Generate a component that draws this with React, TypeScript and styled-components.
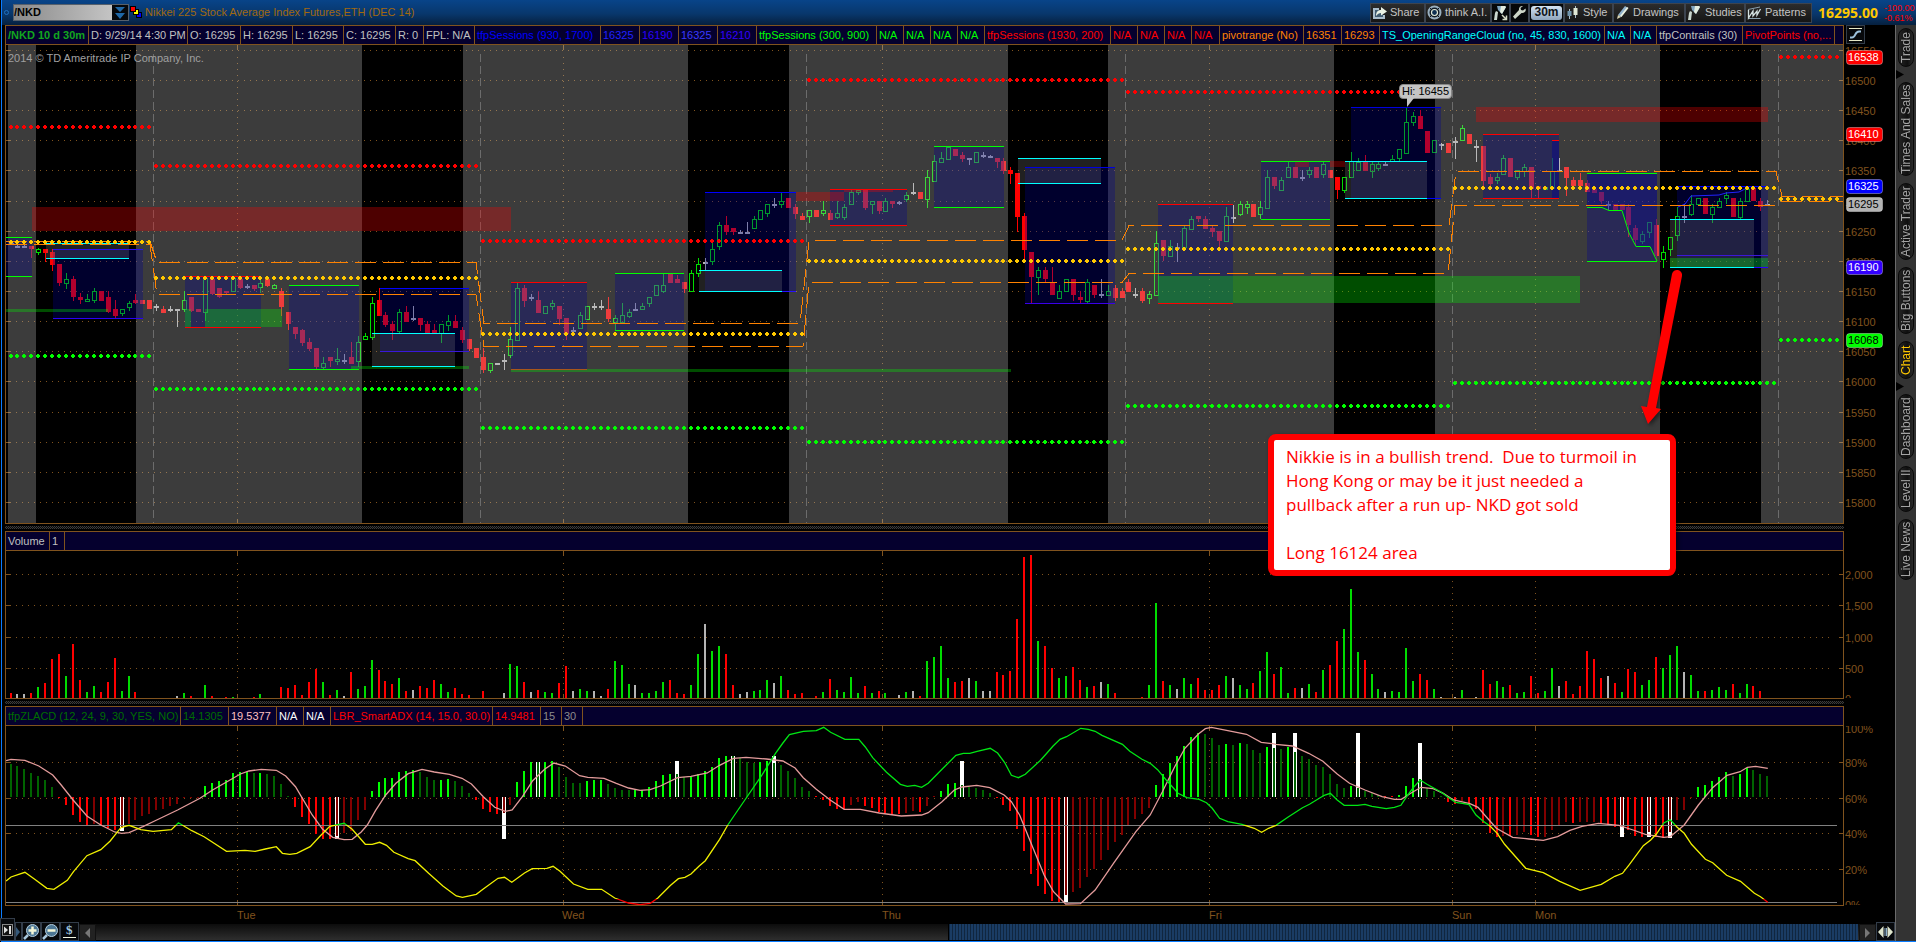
import React from 'react';
import styled, { createGlobalStyle } from 'styled-components';

const BROWN = '#80531e';
const NAVY = '#05002e';

const GlobalStyle = createGlobalStyle`
  html, body, #root { height: 100%; margin: 0; }
  body {
    background: #000;
    font-family: "Liberation Sans", Arial, sans-serif;
    font-size: 11px;
    line-height: 13px;
    overflow: hidden;
  }
  *, *::before, *::after { box-sizing: border-box; }
  button, input { font: inherit; margin: 0; }
`;

/* ---------- layout ---------- */

const Page = styled.div`
  min-height: 100vh;
  display: flex;
  flex-direction: column;
  margin-left: 1px;
  border-left: 1px solid #0a7cff;
  border-bottom: 1px solid #0a7cff;
  background: #000;
`;

const TopBar = styled.header`
  height: 25px;
  flex: none;
  display: flex;
  align-items: center;
  background: linear-gradient(#084489, #08376c 55%, #06203f);
`;

const Body = styled.div`
  flex: 1;
  display: flex;
  min-height: 0;
`;

const Workspace = styled.main`
  position: relative;
  flex: 1;
  min-width: 0;
  display: flex;
  flex-direction: column;
`;

const PanelRow = styled.section`
  display: flex;
  padding-left: 3px;
`;

const Panel = styled.div`
  flex: 1;
  min-width: 0;
  border: 1px solid ${BROWN};
`;

const Axis = styled.aside`
  width: 51px;
  flex: none;
  display: flex;
  flex-direction: column;
  align-items: flex-start;
`;

const AxisHead = styled.div`
  height: 20px;
  padding-left: 2px;
`;

const Plot = styled.svg<{ $h: number }>`
  display: block;
  width: 100%;
  height: ${(p) => p.$h}px;
`;

const Scale = styled.svg<{ $h: number }>`
  display: block;
  width: 51px;
  height: ${(p) => p.$h}px;
  font-family: "Liberation Sans", Arial, sans-serif;
  font-size: 11px;
`;

const Splitter = styled.div`
  height: 7px;
  margin: 0 51px 0 3px;
  padding: 2px 0;
  background: repeating-conic-gradient(#3c3c3c 0 25%, #0a0a0a 0 50%) 0 0 / 2px 2px content-box;
`;

/* ---------- top bar ---------- */

const Pin = styled.span`
  width: 5px;
  height: 5px;
  margin: 0 4px 0 2px;
  border: 1px solid #1f6fc0;
  border-radius: 50%;
`;

const SymbolBox = styled.div`
  display: flex;
  width: 116px;
  height: 17px;
  border: 1px solid #56606c;
`;

const SymbolInput = styled.input`
  flex: 1;
  min-width: 0;
  border: 0;
  padding: 0;
  background: linear-gradient(90deg, #8a8a8a, #c4c4c4);
  color: #000;
  font-weight: bold;
  outline: none;
`;

const DropButton = styled.button`
  width: 16px;
  border: 0;
  padding: 0;
  background: #05080c;
  line-height: 0;
`;

const LinkButton = styled.button`
  width: 13px;
  height: 15px;
  margin: 0 2px 0 1px;
  padding: 0;
  border: 0;
  background: none;
`;

const Title = styled.h1`
  flex: 1;
  margin: 0;
  font-size: 11px;
  font-weight: normal;
  color: #a2690f;
  white-space: nowrap;
`;

const Tools = styled.div`
  display: flex;
  height: 20px;
`;

const ToolButton = styled.button<{ $w: number; $dark?: boolean }>`
  width: ${(p) => p.$w}px;
  height: 20px;
  display: flex;
  align-items: center;
  gap: 3px;
  padding: 0 0 0 1px;
  border: 1px solid #3c4450;
  background: ${(p) => (p.$dark ? '#050709' : 'linear-gradient(#2c2c2c, #151515)')};
  color: #c4c4c4;
  white-space: nowrap;

  svg { flex: none; }
`;

const Timeframe = styled.span`
  width: 31px;
  height: 14px;
  border-radius: 3px;
  background: linear-gradient(#d3e3f2, #8fa5bd);
  color: #10151b;
  font-size: 12px;
  font-weight: bold;
  text-align: center;
`;

const Last = styled.strong`
  width: 72px;
  padding-left: 6px;
  color: #ffc800;
  font: bold 14px "Open Sans", sans-serif;
`;

const Change = styled.div`
  width: 32px;
  color: #ff0000;
  font-size: 9px;
  line-height: 10px;
`;

/* ---------- study strips ---------- */

const Strip = styled.div`
  display: flex;
  height: 19px;
  background: ${NAVY};
  border-bottom: 1px solid ${BROWN};
`;

const StripCell = styled.span<{ $w: number; $color?: string; $bold?: boolean }>`
  flex: 0 1 ${(p) => p.$w}px;
  min-width: 0;
  padding: 3px 0 0 2px;
  overflow: hidden;
  white-space: nowrap;
  border-right: 1px solid ${BROWN};
  color: ${(p) => p.$color ?? '#c0c0c0'};
  font-weight: ${(p) => (p.$bold ? 'bold' : 'normal')};
`;

/* ---------- side tabs ---------- */

const Sidebar = styled.nav`
  width: 21px;
  flex: none;
  display: flex;
  flex-direction: column;
  align-items: center;
  gap: 7px;
  padding-top: 3px;
  background: #333;
  border-left: 1px solid #6a6a6a;
`;

const SideTab = styled.button<{ $h: number; $active?: boolean }>`
  width: 16px;
  height: ${(p) => p.$h}px;
  padding: 0;
  border: 1px solid #090909;
  border-radius: 8px;
  background: linear-gradient(90deg, #2a2a2a, #101010 40%, #242424);
  color: ${(p) => (p.$active ? '#ffc800' : '#a4a4a4')};
  font-size: 12px;
  line-height: 14px;
  white-space: nowrap;
  writing-mode: vertical-rl;
  transform: rotate(180deg);
`;

const Notch = styled.svg`
  width: 8px;
  height: 9px;
  margin: -4px 0;
  align-self: flex-start;
`;

/* ---------- bottom ---------- */

const TimeAxis = styled.svg`
  display: block;
  width: calc(100% - 54px);
  height: 16px;
  margin-left: 3px;
  font-family: "Liberation Sans", Arial, sans-serif;
  font-size: 11px;
`;

const BottomBar = styled.footer`
  display: flex;
  flex: none;
  height: 19px;
  margin-left: -2px;
`;

const IconButton = styled.button<{ $w: number; $tall?: boolean }>`
  width: ${(p) => p.$w}px;
  height: ${(p) => (p.$tall ? 23 : 19)}px;
  margin-top: ${(p) => (p.$tall ? -4 : 0)}px;
  padding: 0;
  flex: none;
  display: flex;
  align-items: center;
  justify-content: center;
  border: 1px solid #333d4a;
  background: #07090c;
`;

const ScrollStep = styled(IconButton)`
  border-color: #111;
  background: #222;
  height: 17px;
  margin-top: 2px;
`;

const Track = styled.div`
  flex: 1;
  height: 16px;
  margin-top: 2px;
  display: flex;
  justify-content: flex-end;
  background: linear-gradient(#0c0c0c, #2e2e2e);
`;

const Thumb = styled.div`
  width: 51.6%;
  height: 16px;
  margin-right: 1px;
  border-left: 1px solid #000;
  background: repeating-linear-gradient(90deg, #10263f 0 1px, #1a3c64 1px 3px);
`;

/* ---------- annotations ---------- */

const Callout = styled.div`
  position: absolute;
  top: 409px;
  right: 219px;
  width: 408px;
  height: 142px;
  padding: 5px 0 0 12px;
  border: 6px solid #ff0000;
  border-radius: 8px;
  background: #fff;
  box-shadow: 2px 2px 4px rgba(0, 0, 0, 0.6);
  color: #ff0000;
  font: 17px/24px "Open Sans", "Noto Sans", sans-serif;
  white-space: pre;
`;

const Arrow = styled.svg`
  position: absolute;
  top: 241px;
  right: 206px;
  width: 56px;
  height: 166px;
  filter: drop-shadow(2px 2px 2px rgba(0, 0, 0, 0.5));
`;

const HighFlag = styled.div`
  position: absolute;
  top: 59px;
  right: 443px;
  width: 53px;
  height: 15px;
  border: 1px solid #888;
  border-radius: 4px;
  background: #c4c4c4;
  color: #000;
  text-align: center;
`;

const HighTail = styled.svg`
  position: absolute;
  top: 73px;
  right: 480px;
  width: 9px;
  height: 10px;
`;

/* ---------- chart data ---------- */

const barX = (i: number) => Math.floor(11 + i * 6.944);

// kind high top bottom low, one entry for each half hour
const candles = `
w 240 243 243 243,w 245 246 247 247,w 245 246 247 247,r 246 246 249 258,g 248 249 252 255,r 249 249 253 262,r 249 252 265 271,r 264 264 283 286,g 273 279 283 289,r 276 279 297 301,
r 293 297 300 304,g 294 299 301 301,g 288 291 300 303,r 291 291 301 301,r 291 297 312 313,r 300 309 316 318,g 309 309 313 316,g 301 303 307 311,r 294 300 303 304,r 300 300 304 304,
r 300 300 309 309,w 304 306 308 311,r 306 309 313 313,w 306 309 310 312,w 309 309 310 327,g 291 300 309 312,r 297 297 311 312,r 309 309 312 312,g 278 278 312 321,r 279 279 294 295,
r 288 288 297 298,r 291 291 293 294,g 278 278 291 292,r 278 279 288 289,w 284 286 287 289,r 285 285 289 291,g 280 283 287 293,r 279 279 286 287,g 284 285 288 288,r 288 291 307 316,
r 312 312 324 330,r 327 327 334 339,r 329 330 343 346,r 338 342 349 351,r 348 348 367 369,g 357 363 367 369,r 357 357 361 367,g 348 359 361 365,w 354 360 362 364,r 342 357 364 364,
g 336 342 361 367,g 333 336 339 339,g 297 303 337 340,r 288 300 316 316,r 312 315 325 327,r 321 324 331 340,g 309 312 331 333,r 306 312 322 322,w 306 318 320 321,r 318 318 325 331,
r 321 324 333 333,r 324 330 333 333,g 324 324 333 343,g 315 321 325 331,r 315 321 328 328,r 327 330 340 343,r 339 339 349 351,r 348 348 358 358,r 348 357 370 373,g 363 363 370 373,
w 363 363 364 364,w 354 360 362 370,g 327 339 355 358,g 283 288 340 340,r 285 288 301 307,w 294 297 299 301,r 291 300 313 313,g 306 306 313 313,g 300 303 306 310,r 306 306 319 325,
r 318 318 334 340,w 327 330 331 333,g 312 315 328 328,g 306 306 319 319,w 303 306 308 310,w 300 306 307 310,r 297 309 319 322,g 315 318 322 330,g 303 315 322 322,g 309 312 316 318,
w 303 309 311 311,g 303 306 309 309,g 297 297 303 307,g 285 285 295 295,g 274 285 291 293,r 274 274 283 283,r 275 279 283 283,r 282 282 289 293,g 270 273 291 291,g 258 264 273 277,
w 258 262 263 270,g 243 249 261 265,g 222 225 246 250,r 216 225 232 235,r 228 228 232 235,w 230 232 233 234,w 222 232 233 233,g 216 219 228 228,g 210 210 219 219,g 204 204 213 217,
w 198 204 206 208,g 193 201 204 208,r 198 198 208 208,r 204 207 214 219,r 213 216 220 220,g 210 210 216 223,r 210 210 217 217,g 201 210 213 216,r 210 213 220 220,g 201 213 217 219,
g 204 207 217 220,g 190 192 204 204,g 190 190 192 195,r 190 190 208 210,g 201 201 204 214,r 201 201 211 214,g 198 201 211 211,r 201 201 204 208,w 201 202 203 205,g 192 195 199 202,
w 183 192 193 195,r 192 192 199 199,g 170 177 199 208,g 155 161 181 181,g 152 158 162 162,g 147 147 159 159,r 149 149 156 156,r 152 155 159 162,w 158 158 159 165,g 152 152 162 162,
w 152 155 156 158,w 155 156 157 158,r 158 158 162 168,r 158 161 171 174,r 167 170 174 184,r 173 173 217 232,r 213 216 250 260,r 252 252 277 303,g 267 270 277 295,r 267 270 279 283,
r 267 282 295 295,g 285 291 298 298,g 279 279 291 291,r 279 279 295 301,r 291 297 300 303,g 279 282 301 303,r 285 285 295 298,w 279 294 295 298,g 285 291 295 295,r 285 288 298 301,
r 288 291 298 298,r 279 282 292 292,w 288 294 295 298,r 288 291 301 303,g 291 294 298 304,g 231 243 295 295,r 240 240 256 261,g 240 246 256 256,w 243 247 248 262,g 225 228 247 247,
g 216 219 229 229,r 216 216 219 222,r 216 219 229 229,r 225 228 232 237,r 231 231 241 247,g 207 216 241 241,w 205 217 218 223,g 201 204 214 216,g 201 204 207 214,r 204 204 217 217,
g 201 207 214 219,g 170 177 208 208,r 177 177 186 189,g 177 180 190 190,g 162 167 177 177,r 167 167 178 178,w 170 177 178 181,g 167 170 174 178,r 167 167 178 178,g 162 164 174 178,
r 170 170 178 178,r 177 177 190 199,g 177 177 190 193,g 152 161 177 177,g 158 162 170 170,r 155 162 171 171,g 161 164 171 178,g 162 164 168 171,w 162 164 165 165,g 155 159 161 161,
g 149 149 158 161,g 108 122 153 153,g 112 116 122 126,r 110 116 129 129,r 131 131 153 153,g 140 140 152 152,w 143 144 145 150,r 143 143 153 153,w 137 141 142 159,g 125 128 140 140,
r 134 134 144 144,w 140 146 147 162,r 146 146 181 189,r 174 177 184 189,g 173 177 180 184,g 155 158 174 174,r 158 158 177 177,g 170 170 177 180,g 164 167 171 177,r 167 167 189 199,
r 186 186 189 199,g 186 187 189 189,g 158 171 188 188,w 158 170 171 171,r 167 167 178 196,r 177 180 186 186,r 173 180 186 186,r 180 183 192 192,r 189 189 193 193,r 192 192 201 204,
w 201 204 205 210,r 204 204 210 210,r 204 204 210 210,r 204 207 225 237,r 225 228 240 246,g 231 234 241 244,g 222 222 232 238,r 219 225 256 260,g 246 252 259 268,g 237 237 249 256,
g 207 216 235 241,w 204 216 217 223,g 195 204 214 216,g 198 198 204 204,r 198 198 214 214,g 204 207 214 223,g 198 201 207 207,g 192 195 198 204,r 198 198 217 217,g 198 201 217 219,
g 186 189 201 201,r 188 188 201 201,r 198 201 207 211,w 200 204 205 205`
  .trim()
  .split(/,\s*/)
  .map((s) => {
    const [kind, ...v] = s.split(' ');
    const [high, top, bottom, low] = v.map(Number);
    return { kind, high, top, bottom, low };
  });

const volume = `
r5 w4 w4 r5 g11 r15 r39 r44 g22 r54 r18 g6 g12 r6 r16 r40 g7 g22 r6 w0 w0 w0 w0 w0 w2 g5 r2 w0 g13 r2
w0 r1 g1 w0 w0 r1 g4 w0 w0 r11 r10 r13 r3 r16 r29 g16 r3 g8 w2 r26 g9 g12 g38 r28 r17 r14 g20 r7 w8 r12
r10 r18 g14 g6 r10 r4 r3 w0 r7 w0 w0 w5 g34 g32 r16 w6 r8 g6 g5 r15 r32 w7 g9 g7 w7 w2 r9 g37 g33 g14
w13 g5 g5 g7 g16 r18 r5 r4 g13 g44 w74 g47 g52 r44 r13 w4 w6 g7 g8 g18 w15 g22 r8 r4 r5 w0 r2 g6 r19 g8
g6 g21 g5 r12 g5 r7 g5 w0 w3 g6 w7 r2 g37 g41 g52 g20 r16 r17 w20 g17 w7 w7 r26 r23 r27 r79 r141 r143 g57 r52
r30 g20 g22 r31 r18 g11 r12 w16 g14 r5 w0 w0 w0 r1 g13 g95 r17 g13 w9 g20 g14 r20 r8 r8 r13 g22 w20 g13 g9 r15
g27 g46 r24 g31 g5 r10 w10 g14 r6 g28 r33 r57 g69 g109 g46 r38 g24 g9 w6 g7 g6 g50 g17 r24 r18 g9 w1 w0 w1 g8
w0 w1 r28 r14 g17 g11 r13 g5 g6 r22 r5 g7 g30 w12 r17 r4 r12 r47 r39 r20 w22 r15 g6 r29 r26 g13 g18 r41 g30 g43
g52 w26 g23 g7 r7 g8 g11 g8 r14 g5 g14 r12 r7`
  .trim()
  .split(/\s+/)
  .map((s) => ({ kind: s[0], size: Number(s.slice(1)) }));

// G/R: momentum growing, g/r: fading; a number after "/" is a white signal bar
const momentum = `
g33 g31 g28 g24 g21 g17 g10 R-1 R-8 R-18 R-25 R-28 r-27 R-28 R-31 R-33 r-31/-34 r-27 r-23 r-19 r-17 r-13 r-12 r-9 r-7 r-1 r-1 r-1 G11 G14
G16 G17 G24 G25 G25 g24 G24 g23 g21 g13 g1 R-10 R-20 R-27 R-37 R-42 R-42 r-39/-42 r-36 r-34 r-23 r-13 G6 G15 G19 G19 G25 G26 G27 g25
g20 g17 G17 G18 g16 g11 g4 R-3 R-12 R-15 R-17 r-16/-42 r-8 G15 G26 G35 g35/35 G35 G36 g30 g20 g14 g14 G16 G17 G17 g13 g9 g7 g7
G7 G7 G10 G16 G22 G23 g23/36 g20 G20 G23 G26 G30 G39 G41 g41/41 g39 g35 g34 G35 G36 g34/41 g32 g26 g19 g10 g6 R1 R-3 R-9 R-12
R-12 r-8 r-5 R-9 R-11 R-15 R-16 R-17 R-17 r-16 r-14 R-15 r-9 r1 G6 G13 G14 g12/36 g10 g9 g7 g4 R-1 R-8 R-14 R-32 R-54 R-77 R-89 R-97
R-104 R-105 r-98/-105 r-95 r-91 r-80 r-72 r-63 r-53 r-45 r-38 r-28 r-22 r-17 r-11 G12 G23 G34 G41 G51 G60 G64 g63 g59 g52 G53 g52 G54 g53 g47
g44 G50 g49/64 g48 G50 g45/64 g41 g38 g32 g30 g23 g13 g9 G11 g9/64 g6 g4 g2 R1 R1 G2 G11 G19 g18/54 g9 g6 g1 R-5 R-7 r-4
R-8 R-12 R-26 R-36 R-40 r-39 R-39 r-38 r-35 R-38 R-40 r-40 r-33 r-28 r-25 R-26 r-25 r-25 r-25 R-27 R-28 R-30 r-30/-40 R-33 R-39 R-40 r-35/-40 R-40 R-41 r-35/-41
r-23 r-13 r-1 G10 G12 G16 G20 G25 g21 G23 G29 g27 g23 g21`
  .trim()
  .split(/\s+/)
  .map((s) => {
    const [v, w] = s.slice(1).split('/');
    return { kind: s[0], size: Number(v), signal: w === undefined ? null : Number(w) };
  });

// Curve points are kept on a finer integer grid: 2.45 steps to a unit across, 3 down.
const trace = (ox: number, oy: number, pts: string) =>
  pts
    .trim()
    .split(/\s+/)
    .map((p) => {
      const [x, y] = p.split(',').map(Number);
      return `${(ox + x / 2.45).toFixed(1)},${(oy + y / 3).toFixed(1)}`;
    })
    .join(' ');

const signalLine = [
  trace(0, 530, `15,692 27,688 61,691 95,708 129,735 150,765 179,810 213,858 247,885 281,906 298,910 316,908 350,890 384,870 435,840 490,805 520,781 589,732 610,723 640,718 677,721 700,738 724,770 741,805 765,855 790,897 815,922 843,929 863,928 885,906 900,885 920,842 945,795 970,760 1000,731 1034,718 1064,726 1101,733 1132,745 1155,762 1184,800 1212,832 1238,844 1255,840 1280,800 1305,752 1335,717 1357,699 1385,708 1420,737 1440,742 1480,745 1510,760 1540,774`),
  trace(640, 530, `0,781 25,779 50,768 92,743 125,739 165,729 195,706 229,685 260,682 310,687 350,693 380,714 400,743 432,778 466,810 500,838 540,838 586,849 640,858 690,855 706,848 740,815 770,780 789,771 825,766 857,773 892,795 910,815 930,855 960,945 990,1035 1013,1085 1043,1122 1079,1121 1115,1080 1160,1000 1215,905 1250,855 1280,785 1310,710 1335,655 1368,612 1385,596 1400,592 1440,602 1486,613 1522,637 1550,641`),
  trace(1276, 600, `0,433 40,438 80,460 115,484 150,522 180,550 218,570 260,590 290,598 307,598 330,580 355,562 385,566 410,580 435,600 475,611 495,622 515,650 540,685 580,712 620,717 655,721 690,710 720,691 750,679 790,670 840,676 875,690 905,703 950,712 966,710 1000,675 1035,615 1070,563 1105,526 1137,515 1155,502 1175,499 1205,505`),
].join(' ');

const adxLine = [
  trace(0, 530, `15,1053 27,1041 61,1027 85,1048 115,1075 132,1078 165,1051 180,1025 213,977 247,959 270,933 296,893 316,886 345,899 375,904 420,899 437,878 470,902 500,920 555,964 600,961 625,964 650,957 677,950 692,970 710,973 727,970 760,950 785,917 808,889 843,880 863,898 895,943 912,943 930,937 947,946 965,967 1000,986 1017,992 1050,1030 1085,1068 1118,1098 1133,1102 1167,1093 1184,1077 1220,1045 1236,1042 1254,1057 1285,1029 1304,1016 1340,1015 1355,1009 1372,1024 1405,1062 1440,1078 1474,1078 1506,1104 1540,1119 1568,1124`),
  trace(640, 530, `25,1120 43,1105 75,1066 94,1046 110,1042 125,1032 145,1008 160,992 195,928 215,885 240,840 262,801 300,733 332,670 350,639 366,614 400,604 432,602 450,592 467,607 502,628 536,628 552,651 570,683 604,727 638,763 655,769 673,766 690,772 706,760 740,718 774,676 792,670 808,670 826,664 858,655 876,669 893,697 910,736 927,743 944,733 980,692 995,672 1012,648 1029,628 1045,620 1080,595 1098,598 1115,604 1132,616 1182,643 1200,664 1230,688 1250,700 1268,719 1290,751 1318,790 1340,803 1370,808 1388,818 1402,835 1420,865 1440,875 1475,883 1505,895 1523,907 1540,895`),
  trace(1276, 600, `0,676 30,651 65,623 82,613 118,586 133,580 150,600 167,616 200,616 218,613 235,619 270,626 290,622 306,616 320,590 335,565 353,540 370,553 405,577 420,590 440,607 457,610 473,614 490,645 508,664 525,679 542,700 560,733 612,805 655,818 695,844 745,871 797,853 830,829 849,820 866,793 900,737 918,720 932,702 950,669 966,659 983,682 1000,700 1018,733 1052,778 1070,788 1104,826 1138,844 1172,880 1187,890 1205,907`),
].join(' ');

const priceGrid = [
  [50, '16550'], [80, '16500'], [110, '16450'], [140, '16400'], [170, '16350'], [201, '16300'],
  [231, '16250'], [261, '16200'], [291, '16150'], [321, '16100'], [351, '16050'], [381, '16000'],
  [412, '15950'], [442, '15900'], [472, '15850'], [502, '15800'],
] as [number, string][];

const volumeGrid = [[574, '2,000'], [605, '1,500'], [637, '1,000'], [668, '500'], [698, '0']] as [number, string][];
const percentGrid = [[728, '100%'], [762, '80%'], [798, '60%'], [833, '40%'], [869, '20%'], [904, '0%']] as [number, string][];

const badges = [
  [57, '16538', '#ff0000', '#fff'],
  [134, '16410', '#ff0000', '#fff'],
  [186, '16325', '#0000ff', '#fff'],
  [204, '16295', '#b4b4b4', '#000'],
  [267, '16190', '#3300ff', '#fff'],
  [340, '16068', '#00ff00', '#000'],
] as [number, string, string, string][];

const dayNames = [[237, 'Tue'], [562, 'Wed'], [882, 'Thu'], [1209, 'Fri'], [1452, 'Sun'], [1535, 'Mon']] as [number, string][];
const dateLines = [237, 563, 882, 1209, 1535];
const sessionBreaks = [153, 480, 806, 1125, 1452, 1778];
const dayBands = [[8, 36], [136, 362], [463, 688], [789, 1008], [1108, 1334], [1435, 1660], [1761, 1843]];

// from bar, to bar, resistance, pivot, support
const pivots = [
  [0, 20, 127, 242, 356], [21, 67, 166, 278, 389], [68, 114, 241, 334, 428], [115, 160, 80, 261, 442],
  [161, 207, 92, 249, 406], [208, 254, 0, 188, 383], [255, 263, 57, 199, 340],
];

// x1, x2, y1, y2, line above, line below
const sessions = [
  [6, 32, 237, 276, '#0f0', '#0f0'],
  [53, 143, 249, 318, '#2a10ee', '#2a00f5'],
  [185, 261, 276, 327, '#f00', '#f00'],
  [289, 359, 285, 369, '#0f0', '#0f0'],
  [380, 469, 288, 351, '#00f', '#3a18d8'],
  [511, 587, 282, 369, '#f00', '#a8561c'],
  [615, 684, 273, 330, '#0f0', '#0f0'],
  [705, 796, 192, 291, '#00f', '#2a10ff'],
  [830, 907, 189, 225, '#f00', '#f00'],
  [934, 1004, 146, 207, '#0f0', '#0f0'],
  [1025, 1115, 167, 303, '#00d', '#3a00e8'],
  [1158, 1233, 204, 303, '#f00', '#f00'],
  [1261, 1330, 161, 219, '#0f0', '#0f0'],
  [1351, 1441, 107, 198, '#00d', '#00f'],
  [1483, 1559, 134, 198, '#f00', '#f00'],
  [1587, 1657, 173, 261, '#0f0', '#0f0'],
  [1677, 1768, 186, 267, '#00f', '#2a00ff'],
] as [number, number, number, number, string, string][];

const openings = [
  [46, 129, 243, 258], [372, 455, 333, 366], [699, 782, 270, 291], [1018, 1101, 158, 183],
  [1345, 1427, 161, 198], [1670, 1754, 219, 267],
];

const redZones = [
  [32, 511, 207, 231], [796, 844, 192, 201], [844, 893, 190, 192], [1295, 1309, 161, 167],
  [1330, 1345, 161, 167], [1476, 1768, 107, 122],
];

const greenZones = [
  [6, 108, 309, 312], [185, 191, 309, 327], [205, 282, 309, 327], [351, 469, 366, 369],
  [511, 1011, 369, 372], [1158, 1580, 276, 303], [1670, 1768, 258, 267],
];

const upperBand = '6,241 150,241 157,262 476,262 484,323 800,323 809,240 1122,240 1129,225 1449,225 1456,171 1776,171 1782,196 1843,196';
const lowerBand = '6,244 150,244 157,294 476,294 484,346 803,346 809,282 1122,282 1129,273 1448,273 1455,205 1776,205 1782,201 1843,201';

const kindColor: Record<string, string> = { g: '#00dc00', r: '#ff0000', w: '#b4b4b4' };
const momentumColor: Record<string, string> = { G: '#00ff00', g: '#006400', R: '#ff0000', r: '#820000' };

/* ---------- chart pieces ---------- */

const Block = ({ b, fill }: { b: number[]; fill: string }) => (
  <rect x={b[0]} y={b[2]} width={b[1] - b[0]} height={b[3] - b[2]} fill={fill} />
);

const Grid = ({ rows, columns, top, bottom }: { rows: [number, string][]; columns: number[]; top: number; bottom: number }) => (
  <g stroke={BROWN} shapeRendering="crispEdges">
    {rows.map(([y]) => (
      <g key={y}>
        <line x1={10} x2={1832} y1={y + 0.5} y2={y + 0.5} strokeDasharray="1 5" />
        <path d={`M6 ${y + 0.5}h5M1839 ${y + 0.5}h4`} />
      </g>
    ))}
    {columns.map((x) => (
      <g key={x}>
        <line x1={x + 0.5} x2={x + 0.5} y1={top + 12} y2={bottom} strokeDasharray="1 5" />
        <path d={`M${x + 0.5} ${top}v5M${x + 0.5} ${bottom - 4}v4`} />
      </g>
    ))}
  </g>
);

const Candle = ({ i }: { i: number }) => {
  const c = candles[i];
  const x = barX(i);
  const color = kindColor[c.kind];
  const h = Math.max(2, c.bottom - c.top);
  return (
    <g>
      {c.top > c.high && <rect x={x} y={c.high} width={1} height={c.top - c.high} fill={color} />}
      {c.low > c.bottom && <rect x={x} y={c.bottom} width={1} height={c.low - c.bottom} fill={color} />}
      {c.kind === 'g' ? (
        <rect x={x - 1.5} y={c.top + 0.5} width={4} height={Math.max(2, h)} fill="none" stroke={color} />
      ) : (
        <rect x={x - 2} y={c.top} width={5} height={h} fill={color} />
      )}
    </g>
  );
};

const DotRow = ({ from, to, y, fill }: { from: number; to: number; y: number; fill: string }) => (
  <g fill={fill}>
    {Array.from({ length: to - from + 1 }, (_, k) => {
      const x = barX(from + k);
      return <path key={k} d={`M${x - 1} ${y - 2}h2v1h1v2h-1v1h-2v-1h-1v-2h1z`} />;
    })}
  </g>
);

const PricePlot = () => (
  <Plot $h={478} viewBox="6 45 1837 478" preserveAspectRatio="none">
    <Grid rows={priceGrid} columns={dateLines} top={45} bottom={523} />
    <g shapeRendering="crispEdges">
      {candles.map((_, i) => <Candle key={i} i={i} />)}
      {dayBands.map(([a, b]) => <Block key={a} b={[a, b, 45, 523]} fill="rgba(200,200,200,.3)" />)}
      {sessionBreaks.map((x) => (
        <line key={x} x1={x + 0.5} x2={x + 0.5} y1={54} y2={523} stroke="#6c6c6c" strokeDasharray="8 4" />
      ))}
      {sessions.map((s) => <Block key={s[0]} b={s.slice(0, 4) as number[]} fill="rgba(0,0,150,.3)" />)}
      <polygon points="1587,173 1657,173 1657,261 1650,246 1636,246 1629,233 1622,210 1609,210 1602,207 1587,207" fill="rgba(0,0,150,.3)" />
      <Block b={[1552, 1559, 140, 198]} fill="rgba(0,0,150,.4)" />
      {openings.map((o) => <Block key={o[0]} b={o} fill="rgba(140,140,140,.24)" />)}
      {redZones.map((z) => <Block key={z[0]} b={z} fill="rgba(255,0,0,.3)" />)}
      {greenZones.map((z) => <Block key={z[0]} b={z} fill="rgba(0,255,0,.3)" />)}
      {sessions.map((s) => (
        <g key={s[0]}>
          <rect x={s[0]} y={s[2]} width={s[1] - s[0]} height={1} fill={s[4]} />
          <rect x={s[0]} y={s[3]} width={s[1] - s[0]} height={1} fill={s[5]} />
        </g>
      ))}
      <rect x={1552} y={140} width={7} height={1} fill="#f00" />
      <rect x={1677} y={255} width={91} height={1} fill="#3c18d8" />
      {openings.map((o) => (
        <g key={o[0]} fill="#00ffff">
          <rect x={o[0]} y={o[2]} width={o[1] - o[0]} height={1} />
          <rect x={o[0]} y={o[3]} width={o[1] - o[0]} height={1} />
        </g>
      ))}
    </g>
    <polyline points="1587,207.5 1602,207.5 1609,210.5 1622,210.5 1629,233 1636,246.5 1650,246.5 1657,261" fill="none" stroke="#0f0" />
    <polyline points="1678,207 1685,204 1691,196 1719,195 1726,193 1739,192 1747,188" fill="none" stroke="#2222ff" />
    <g fill="none" stroke="#ff8200" strokeDasharray="21 7" shapeRendering="crispEdges">
      <polyline points={upperBand} transform="translate(0 .5)" />
      <polyline points={lowerBand} transform="translate(0 .5)" />
    </g>
    <g shapeRendering="crispEdges">
      {pivots.map(([from, to, r, p, s]) => (
        <g key={from}>
          {r > 0 && <DotRow from={from} to={to} y={r} fill="#ff0000" />}
          <DotRow from={from} to={to} y={p} fill="#ffc800" />
          <DotRow from={from} to={to} y={s} fill="#00ff00" />
        </g>
      ))}
    </g>
    <text x={8} y={62} fill="#a0a0a0" fontSize={11} fontFamily='"Liberation Sans", Arial, sans-serif'>
      2014 © TD Ameritrade IP Company, Inc.
    </text>
  </Plot>
);

const VolumePlot = () => (
  <Plot $h={147} viewBox="6 551 1837 147" preserveAspectRatio="none">
    <Grid rows={volumeGrid.slice(0, 4)} columns={[...dateLines, 1452]} top={551} bottom={698} />
    <g shapeRendering="crispEdges">
      {volume.map((v, i) => (
        <rect key={i} x={barX(i) - 1} y={698 - v.size} width={2} height={v.size} fill={kindColor[v.kind]} />
      ))}
    </g>
  </Plot>
);

const MomentumPlot = () => (
  <Plot $h={179} viewBox="6 726 1837 179" preserveAspectRatio="none">
    <defs>
      <linearGradient id="adx" gradientUnits="userSpaceOnUse" x1="0" x2="0" y1="726" y2="905">
        <stop offset="0.555" stopColor="#00e614" />
        <stop offset="0.555" stopColor="#f0f000" />
        <stop offset="0.965" stopColor="#f0f000" />
        <stop offset="0.965" stopColor="#ff0000" />
      </linearGradient>
    </defs>
    <Grid rows={percentGrid.slice(1, 5)} columns={[...dateLines, 1452]} top={726} bottom={905} />
    <g shapeRendering="crispEdges">
      {momentum.map((m, i) => {
        const x = barX(i);
        const y = (v: number) => (v > 0 ? 797 - v : 797);
        return (
          <g key={i}>
            {m.signal !== null && (
              <rect x={x - 2} y={y(m.signal)} width={4} height={Math.abs(m.signal)} fill="#fff" />
            )}
            <rect x={x - 1} y={y(m.size)} width={2} height={Math.abs(m.size)} fill={momentumColor[m.kind]} />
          </g>
        );
      })}
      <rect x={6} y={825} width={1831} height={1} fill="#808080" />
      <rect x={6} y={902} width={1831} height={1} fill="#808080" />
    </g>
    <polyline points={signalLine} fill="none" stroke="#e39b9b" strokeWidth={1.3} />
    <polyline points={adxLine} fill="none" stroke="url(#adx)" strokeWidth={1.3} />
  </Plot>
);

const AxisScale = ({ rows, top, height, children }: { rows: [number, string][]; top: number; height: number; children?: React.ReactNode }) => (
  <Scale $h={height} viewBox={`1844 ${top} 51 ${height}`}>
    {rows.map(([y, label]) => (
      <text key={label} x={1845} y={y + 5} fill={BROWN}>{label}</text>
    ))}
    {children}
  </Scale>
);

const PriceBadges = () => (
  <>
    {badges.map(([y, label, fill, ink]) => (
      <g key={label}>
        <rect x={1846.5} y={y - 6.5} width={36} height={14} rx={3} fill={fill} stroke="#fff" strokeOpacity={0.35} />
        <text x={1848} y={y + 4} fill={ink}>{label}</text>
      </g>
    ))}
  </>
);

const headerCells: [number, string, string?][] = [
  [83, '/NKD 10 d 30m', '#12a61e'], [99, 'D: 9/29/14 4:30 PM'], [53, 'O: 16295'], [52, 'H: 16295'], [51, 'L: 16295'],
  [52, 'C: 16295'], [28, 'R: 0'], [51, 'FPL: N/A'], [126, 'tfpSessions (930, 1700)', '#0000ff'], [39, '16325', '#2020ff'],
  [39, '16190', '#2a00ff'], [39, '16325', '#3a3aff'], [39, '16210', '#3300ff'], [120, 'tfpSessions (300, 900)', '#00ff00'],
  [27, 'N/A', '#00ff00'], [27, 'N/A', '#00ff00'], [27, 'N/A', '#00ff00'], [27, 'N/A', '#00ff00'],
  [126, 'tfpSessions (1930, 200)', '#ff0000'], [27, 'N/A', '#ff0000'], [27, 'N/A', '#ff0000'], [27, 'N/A', '#ff0000'], [28, 'N/A', '#ff0000'],
  [84, 'pivotrange (No)', '#ff8200'], [38, '16351', '#ff8200'], [38, '16293', '#ff8200'],
  [225, 'TS_OpeningRangeCloud (no, 45, 830, 1600)', '#00ffff'], [26, 'N/A', '#00ffff'], [26, 'N/A', '#00ffff'],
  [86, 'tfpContrails (30)', '#c0c0c0'], [92, 'PivotPoints (no,...', '#ff0000'],
];

const volumeCells: [number, string, string?][] = [[44, 'Volume'], [15, '1']];

const momentumCells: [number, string, string?][] = [
  [175, 'tfpZLACD (12, 24, 9, 30, YES, NO)', '#006e00'], [48, '14.1305', '#006e00'], [48, '19.5377', '#ffc0c0'],
  [27, 'N/A', '#fff'], [27, 'N/A', '#fff'], [162, 'LBR_SmartADX (14, 15.0, 30.0)', '#ff0000'], [48, '14.9481', '#ff0000'],
  [21, '15', '#8c8c8c'], [21, '30', '#8c8c8c'],
];

const StudyStrip = ({ cells, boldFirst }: { cells: [number, string, string?][]; boldFirst?: boolean }) => (
  <Strip>
    {cells.map(([w, label, color], i) => (
      <StripCell key={i} $w={w} $color={color} $bold={boldFirst && i === 0}>{label}</StripCell>
    ))}
  </Strip>
);

/* ---------- icons ---------- */

const ShareIcon = () => (
  <svg width="15" height="14" viewBox="0 0 15 14">
    <path d="M1 2h6v2H3v7h8V9h2v4H1z" fill="#a9bccb" />
    <path d="M3 4h8v7H3z" fill="#3f5a70" />
    <path d="M4 10c0-4 2-6 5-6V1l6 4.500-6 4V7C7 7 5.500 8 4 10z" fill="#e9f1e4" />
  </svg>
);

const ThinkIcon = () => (
  <svg width="15" height="15" viewBox="0 0 15 15">
    <circle cx="7.500" cy="7.500" r="6" fill="#101a24" stroke="#9ab0c0" strokeWidth="2" />
    <circle cx="7.500" cy="7.500" r="3" fill="#0d2f52" stroke="#dfe8d8" strokeWidth="1.200" />
    <path d="M3 3l2 2M12 3l-2 2M3 12l2-2M12 12l-2-2" stroke="#10161c" />
  </svg>
);

const FlaskIcon = ({ arrow }: { arrow?: boolean }) => (
  <svg width="15" height="16" viewBox="0 0 15 16">
    <path d="M4 1l8 0 1 1-4 7-4-4z" fill="#7fa3bd" />
    <path d="M8 1h4l1 1-4 7-2-2z" fill="#e3ecdf" />
    <path d="M3 6l2 1-1 8H1L2 8z" fill="#c9d6cf" />
    {arrow && <path d="M9 10l4 4M13.500 10.500v4h-4" stroke="#d7dcc8" strokeWidth="1.500" fill="none" />}
  </svg>
);

const WrenchIcon = () => (
  <svg width="15" height="15" viewBox="0 0 15 15">
    <path d="M13.500 3.500l-2.500 2-2-.5-.5-2L11 1C9 .5 6.500 2 7 5L1 11.500 3 14l6.500-6c3 .5 5-2 4-4.500z" fill="#ccd5c8" />
  </svg>
);

const StyleIcon = () => (
  <svg width="14" height="14" viewBox="0 0 14 14">
    <path d="M3.500 3v10M9.500 0v12" stroke="#a8bcc9" />
    <rect x="1.500" y="5" width="4" height="5" fill="#6f93ad" />
    <rect x="7.500" y="2" width="4" height="7" fill="#e0e8d6" />
  </svg>
);

const PencilIcon = () => (
  <svg width="15" height="15" viewBox="0 0 15 15">
    <path d="M10 1l3 2-7 9-3-2z" fill="#8fb1cc" />
    <path d="M12 2l1.500 1-7 9-1.500-1z" fill="#e9f0e0" />
    <path d="M3 10l3 2-4 2z" fill="#d9d3b0" />
  </svg>
);

const PatternIcon = () => (
  <svg width="15" height="14" viewBox="0 0 15 14">
    <path d="M1 3.500L13 1M1.500 12.500h12" stroke="#8aa0ae" />
    <path d="M1.500 4v8L6 5v5l4-5v4l3.500-6" fill="none" stroke="#d5e2e2" strokeWidth="1.300" />
  </svg>
);

const Magnifier = ({ plus }: { plus?: boolean }) => (
  <svg width="17" height="17" viewBox="0 0 17 17">
    <path d="M1 16l4-4" stroke="#a9c8de" strokeWidth="2.500" />
    <circle cx="9.500" cy="7.500" r="6" fill="#4d7795" stroke="#b5cfe0" />
    <path d={plus ? 'M5.500 7.500h8M9.500 3.500v8' : 'M5.500 7.500h8'} stroke="#f4f7d8" strokeWidth="2.500" />
  </svg>
);

const sideTabs: ([string, number] | null)[] = [
  ['Trade', 39], null, ['Times And Sales', 94], ['Active Trader', 77], ['Big Buttons', 67],
  ['Chart', 38], null, ['Dashboard', 65], ['Level II', 46], ['Live News', 61],
];

export default function App() {
  return (
    <>
      <GlobalStyle />
      <Page>
        <TopBar>
          <Pin />
          <SymbolBox>
            <SymbolInput aria-label="Symbol" defaultValue="/NKD" />
            <DropButton aria-label="Recent symbols">
              <svg width="10" height="12" viewBox="0 0 10 12" fill="#1f68a8">
                <path d="M0 0h10L5 5zM0 6h10l-5 6z" />
              </svg>
            </DropButton>
          </SymbolBox>
          <LinkButton aria-label="Link colour">
            <svg width="13" height="14" viewBox="0 0 13 14" stroke="#000">
              <rect x="6.500" y="7.500" width="5" height="5" fill="#00f" />
              <rect x="3.500" y="4.500" width="5" height="5" fill="#ff0" />
              <rect x="0.500" y="1.500" width="5" height="5" fill="#f00" />
            </svg>
          </LinkButton>
          <Title>Nikkei 225 Stock Average Index Futures,ETH (DEC 14)</Title>
          <Tools>
            <ToolButton $w={55}><ShareIcon />Share</ToolButton>
            <ToolButton $w={66}><ThinkIcon />think A.I.</ToolButton>
            <ToolButton $w={19} $dark aria-label="Load study"><FlaskIcon arrow /></ToolButton>
            <ToolButton $w={19} $dark aria-label="Settings"><WrenchIcon /></ToolButton>
            <ToolButton $w={35} $dark><Timeframe>30m</Timeframe></ToolButton>
            <ToolButton $w={49}><StyleIcon />Style</ToolButton>
            <ToolButton $w={72}><PencilIcon />Drawings</ToolButton>
            <ToolButton $w={60}><FlaskIcon />Studies</ToolButton>
            <ToolButton $w={67}><PatternIcon />Patterns</ToolButton>
          </Tools>
          <Last>16295.00</Last>
          <Change>-100.00<br />-0.61%</Change>
        </TopBar>

        <Body>
          <Workspace>
            <PanelRow>
              <Panel>
                <StudyStrip cells={headerCells} boldFirst />
                <PricePlot />
              </Panel>
              <Axis>
                <AxisHead>
                  <IconButton $w={19} aria-label="Price scale">
                    <svg width="15" height="15" viewBox="0 0 15 15" fill="none">
                      <path d="M1 1.500h13M1 13.500h13" stroke="#e6e8c8" />
                      <path d="M2 10.500h2C8 10.500 6.500 4.500 11 4.500h2" stroke="#9cc0da" strokeWidth="2" />
                    </svg>
                  </IconButton>
                </AxisHead>
                <AxisScale rows={priceGrid} top={45} height={478}><PriceBadges /></AxisScale>
              </Axis>
            </PanelRow>
            <Splitter />
            <PanelRow>
              <Panel>
                <StudyStrip cells={volumeCells} />
                <VolumePlot />
              </Panel>
              <Axis>
                <AxisHead />
                <AxisScale rows={volumeGrid} top={551} height={147} />
              </Axis>
            </PanelRow>
            <Splitter />
            <PanelRow>
              <Panel>
                <StudyStrip cells={momentumCells} />
                <MomentumPlot />
              </Panel>
              <Axis>
                <AxisHead />
                <AxisScale rows={percentGrid} top={726} height={179} />
              </Axis>
            </PanelRow>
            <TimeAxis viewBox="5 906 1839 16" preserveAspectRatio="none">
              {dayNames.map(([x, d]) => <text key={d} x={x} y={919} fill={BROWN}>{d}</text>)}
            </TimeAxis>
            <BottomBar>
              <IconButton $w={15} $tall aria-label="Show left panel">
                <svg width="11" height="13" viewBox="0 0 11 13">
                  <rect x="0.500" y="1.500" width="10" height="11" fill="#111" stroke="#888" />
                  <path d="M2 3.500L6 7l-4 3.500z" fill="#ddd" />
                  <rect x="7" y="3" width="2" height="8" fill="#ddd" />
                </svg>
              </IconButton>
              <IconButton $w={7} aria-label="Pan">
                <svg width="5" height="12" viewBox="0 0 5 12"><path d="M0 1l4 5-4 5" fill="#35597a" /></svg>
              </IconButton>
              <IconButton $w={19} aria-label="Zoom in"><Magnifier plus /></IconButton>
              <IconButton $w={19} aria-label="Zoom out"><Magnifier /></IconButton>
              <IconButton $w={19} aria-label="Dollar scale">
                <svg width="15" height="17" viewBox="0 0 15 17">
                  <text x="4" y="11" fontFamily="Liberation Serif, serif" fontSize="13" fontWeight="bold" fill="#a3cbe6">$</text>
                  <rect x="1" y="14" width="13" height="1" fill="#f4f7e4" />
                </svg>
              </IconButton>
              <ScrollStep $w={17} aria-label="Scroll left">
                <svg width="5" height="10" viewBox="0 0 5 10"><path d="M5 0v10L0 5z" fill="#777" /></svg>
              </ScrollStep>
              <Track><Thumb /></Track>
              <ScrollStep $w={17} aria-label="Scroll right">
                <svg width="5" height="10" viewBox="0 0 5 10"><path d="M0 0v10l5-5z" fill="#777" /></svg>
              </ScrollStep>
              <IconButton $w={19} aria-label="Fit">
                <svg width="15" height="12" viewBox="0 0 15 12">
                  <path d="M5.500 0v12L0 6zM9.500 0v12L15 6z" fill="#dfe6cd" />
                  <path d="M7 2v8M8.500 2v8" stroke="#8fb0c8" />
                </svg>
              </IconButton>
            </BottomBar>

            <HighFlag>Hi: 16455</HighFlag>
            <HighTail viewBox="0 0 9 10"><path d="M1 0h7L1 9z" fill="#c4c4c4" /></HighTail>
            <Arrow viewBox="1633 266 56 166">
              <path d="M1672 274a5 5 0 0 1 10 2L1656 408l5 1-13 15-7-18 6 1z" fill="#f00" />
            </Arrow>
            <Callout>{'Nikkie is in a bullish trend.  Due to turmoil in\nHong Kong or may be it just needed a\npullback after a run up- NKD got sold\n\nLong 16124 area'}</Callout>
          </Workspace>
          <Sidebar>
            {sideTabs.map((t, i) =>
              t ? (
                <SideTab key={i} $h={t[1]} $active={t[0] === 'Chart'}>{t[0]}</SideTab>
              ) : (
                <Notch key={i} viewBox="0 0 8 9"><path d="M0 0l8 4.500L0 9z" fill="#000" /></Notch>
              ),
            )}
          </Sidebar>
        </Body>
      </Page>
    </>
  );
}
